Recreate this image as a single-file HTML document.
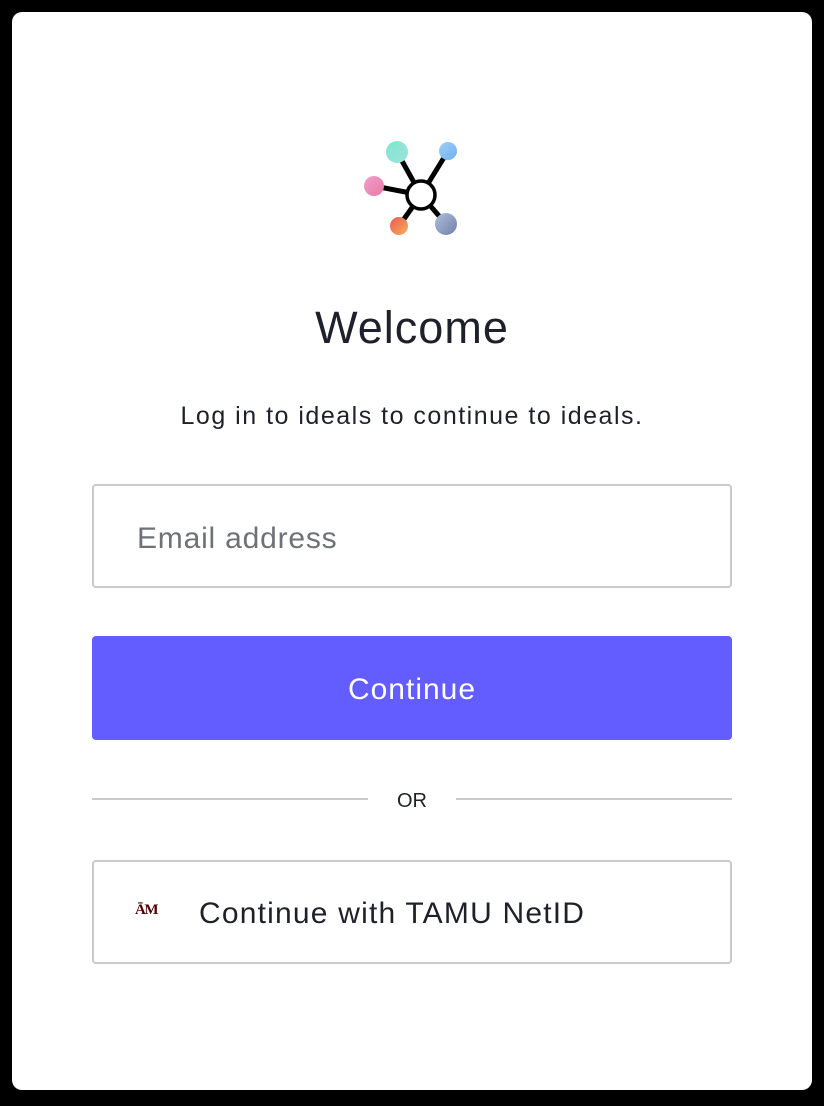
<!DOCTYPE html>
<html><head><style>
html,body{margin:0;padding:0;background:#000;width:824px;height:1106px;overflow:hidden;font-family:"Liberation Sans",sans-serif}
.card{position:absolute;left:12px;top:12px;width:800px;height:1078px;background:#fff;border-radius:10px}
.abs{position:absolute}
</style></head><body>
<div class="card"></div>
<svg class="abs" style="left:350px;top:130px" width="120" height="110" viewBox="350 130 120 110">
<defs>
<linearGradient id="t" x1="0" y1="0" x2="1" y2="1"><stop offset="0" stop-color="#7ee8cf"/><stop offset="1" stop-color="#a0e0dc"/></linearGradient>
<linearGradient id="b" x1="0" y1="0" x2="1" y2="1"><stop offset="0" stop-color="#9ed0f5"/><stop offset="1" stop-color="#6fb0f0"/></linearGradient>
<linearGradient id="p" x1="0" y1="0" x2="1" y2="1"><stop offset="0" stop-color="#f0a0c8"/><stop offset="1" stop-color="#e878a8"/></linearGradient>
<linearGradient id="o" x1="0" y1="0" x2="1" y2="1"><stop offset="0" stop-color="#e85a4a"/><stop offset="1" stop-color="#f5b060"/></linearGradient>
<linearGradient id="g" x1="0" y1="0" x2="1" y2="1"><stop offset="0" stop-color="#b0bedc"/><stop offset="1" stop-color="#7080a8"/></linearGradient>
</defs>
<g stroke="#000" stroke-width="5">
<line x1="397" y1="152" x2="421" y2="195"/><line x1="448" y1="151" x2="421" y2="195"/>
<line x1="374" y1="186" x2="421" y2="195"/><line x1="399" y1="226" x2="421" y2="195"/>
<line x1="446" y1="224" x2="421" y2="195"/>
</g>
<circle cx="421" cy="195" r="14" fill="#fff" stroke="#000" stroke-width="3.5"/>
<circle cx="397" cy="152" r="11" fill="url(#t)"/>
<circle cx="448" cy="151" r="9" fill="url(#b)"/>
<circle cx="374" cy="186" r="10" fill="url(#p)"/>
<circle cx="399" cy="226" r="9" fill="url(#o)"/>
<circle cx="446" cy="224" r="11" fill="url(#g)"/>
</svg>
<div class="abs" style="left:12px;width:800px;top:302px;text-align:center;font-size:45px;letter-spacing:1px;color:#1e212a">Welcome</div>
<div class="abs" style="left:12px;width:800px;top:402px;text-align:center;font-size:25px;letter-spacing:1.5px;color:#1e212a">Log in to ideals to continue to ideals.</div>
<div class="abs" style="left:92px;top:484px;width:636px;height:100px;border:2px solid #c9cace;border-radius:4px"></div>
<div class="abs" style="left:137px;top:522px;font-size:30px;letter-spacing:0.8px;color:#6f7178">Email address</div>
<div class="abs" style="left:92px;top:636px;width:640px;height:104px;overflow:hidden;background:#635dff;border-radius:4px;color:#fff;font-size:30px;letter-spacing:1px;line-height:108px;text-align:center">Continue</div>
<div class="abs" style="left:92px;top:798px;width:276px;height:2px;background:#c9cace"></div>
<div class="abs" style="left:456px;top:798px;width:276px;height:2px;background:#c9cace"></div>
<div class="abs" style="left:368px;width:88px;top:790px;text-align:center;font-size:20px;color:#1e212a">OR</div>
<div class="abs" style="left:92px;top:860px;width:636px;height:100px;border:2px solid #c9cace;border-radius:4px"></div>
<div class="abs" style="left:135px;top:902px;font-size:15px;font-weight:bold;color:#500000;font-family:'Liberation Serif',serif;letter-spacing:-1.5px">ĀM</div>
<div class="abs" style="left:199px;top:897px;font-size:30px;letter-spacing:1.2px;color:#1e212a">Continue with TAMU NetID</div>
</body></html>
